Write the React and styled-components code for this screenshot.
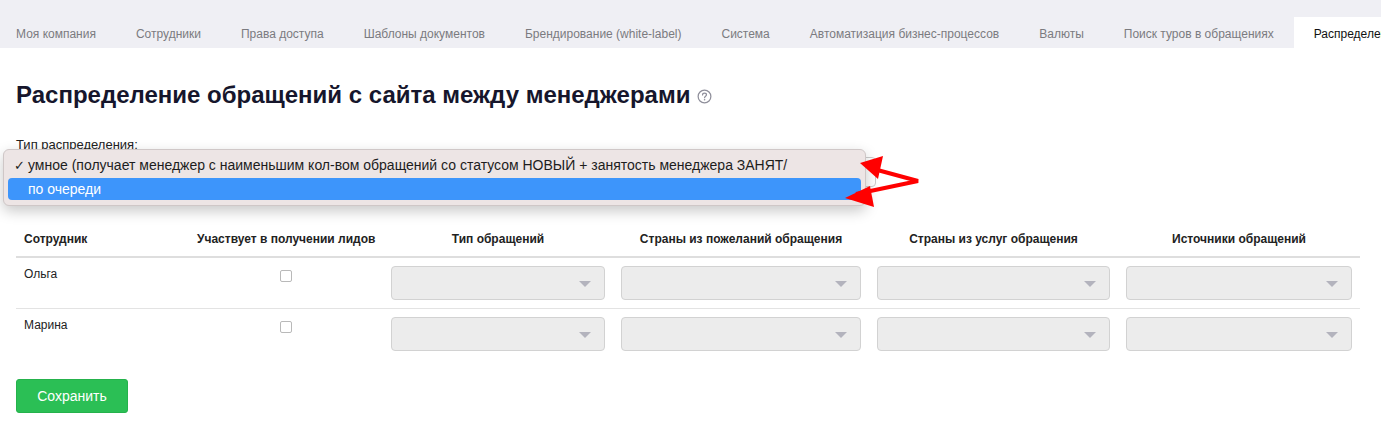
import React from "react";
import styled, { createGlobalStyle } from "styled-components";

const GlobalStyle = createGlobalStyle`
  html, body { margin: 0; padding: 0; background: #fff; }
  body { font-family: "Liberation Sans", Arial, sans-serif; color: #222; }
  * { box-sizing: border-box; }
`;

const Page = styled.div`
  width: 1381px;
  height: 425px;
  overflow: hidden;
  position: relative;
`;

const TabBar = styled.nav`
  height: 48px;
  background: #efeff4;
  display: flex;
  align-items: flex-end;
  padding-left: 16px;
  white-space: nowrap;
  overflow: hidden;
`;

const Tab = styled.div`
  flex: none;
  height: 31px;
  display: flex;
  align-items: center;
  padding: 2px 20px 0;
  font-size: 12px;
  color: ${(p) => (p.$active ? "#111" : "#7b7b80")};
  background: ${(p) => (p.$active ? "#fff" : "transparent")};
  &:first-child { padding-left: 0; }
`;

const Content = styled.main`
  padding: 0 16px;
`;

const Title = styled.h1`
  margin: 33px 0 0;
  font-size: 24px;
  line-height: 28px;
  font-weight: 700;
  color: #16162c;
  display: flex;
  align-items: center;
  gap: 7px;
`;

const HelpIcon = styled.svg`
  width: 15px;
  height: 15px;
  margin-top: 3px;
`;

const FieldGroup = styled.div`
  position: relative;
  margin-top: 28px;
  margin-bottom: 35px;
`;

const Label = styled.div`
  font-size: 13px;
  line-height: 16px;
  color: #222;
`;

const FakeSelect = styled.div`
  margin-top: 4px;
  width: 860px;
  height: 30px;
  border: 1px solid #ccc;
  border-radius: 4px;
  background: #fff;
`;

const Popup = styled.div`
  position: absolute;
  left: -13px;
  top: 12px;
  width: 863px;
  padding: 4px 4px 5px;
  background: #ede5e5;
  border: 1px solid #cfc7c7;
  border-radius: 6px;
  box-shadow: 0 5px 14px rgba(0, 0, 0, 0.22);
  z-index: 5;
`;

const Option = styled.div`
  height: 22px;
  display: flex;
  align-items: center;
  padding-left: ${(p) => (p.$checked ? "6px" : "20px")};
  font-size: 14px;
  color: ${(p) => (p.$highlighted ? "#fff" : "#1d1d1d")};
  background: ${(p) => (p.$highlighted ? "#3d95fb" : "transparent")};
  border-radius: 4px;
  margin-bottom: ${(p) => (p.$highlighted ? "0" : "2px")};
  white-space: nowrap;
`;

const Check = styled.span`
  width: 14px;
  font-size: 13px;
`;

const Arrows = styled.svg`
  position: absolute;
  left: 840px;
  top: 150px;
  z-index: 6;
`;

const Table = styled.table`
  border-collapse: collapse;
  width: 1344px;
  table-layout: fixed;
`;

const Th = styled.th`
  font-size: 12px;
  font-weight: 700;
  line-height: 16px;
  color: #222;
  padding: 9px 8px 9px;
  text-align: ${(p) => p.$align || "center"};
  border-bottom: 2px solid #dedede;
  white-space: nowrap;
`;

const Td = styled.td`
  font-size: 12px;
  line-height: 16px;
  color: #222;
  padding: 8px;
  vertical-align: top;
  text-align: ${(p) => p.$align || "left"};
  border-bottom: ${(p) => (p.$last ? "none" : "1px solid #e3e3e3")};
`;

const Checkbox = styled.span`
  display: inline-block;
  width: 12px;
  height: 12px;
  margin-top: 4px;
  border: 1px solid #b9b9b9;
  border-radius: 2px;
  background: #fff;
`;

const SelectBox = styled.div`
  height: 34px;
  background: #ececec;
  border: 1px solid #d2d2d2;
  border-radius: 4px;
  position: relative;
  &::after {
    content: "";
    position: absolute;
    right: 13px;
    top: 14px;
    border-left: 6px solid transparent;
    border-right: 6px solid transparent;
    border-top: 6px solid #b3b3bd;
  }
`;

const SaveButton = styled.button`
  margin-top: 20px;
  width: 112px;
  height: 34px;
  border: 1px solid #25b24c;
  border-radius: 3px;
  background: #2bbf55;
  color: #fff;
  font-family: "Liberation Sans", Arial, sans-serif;
  font-size: 14px;
  cursor: pointer;
`;

const tabs = [
  "Моя компания",
  "Сотрудники",
  "Права доступа",
  "Шаблоны документов",
  "Брендирование (white-label)",
  "Система",
  "Автоматизация бизнес-процессов",
  "Валюты",
  "Поиск туров в обращениях",
];

const columns = [
  { title: "Сотрудник", width: 173, align: "left" },
  { title: "Участвует в получении лидов", width: 194 },
  { title: "Тип обращений", width: 230 },
  { title: "Страны из пожеланий обращения", width: 256 },
  { title: "Страны из услуг обращения", width: 249 },
  { title: "Источники обращений", width: 242 },
];

const people = ["Ольга", "Марина"];

export default function App() {
  return (
    <Page>
      <GlobalStyle />
      <TabBar>
        {tabs.map((t) => (
          <Tab key={t}>{t}</Tab>
        ))}
        <Tab $active>Распределение обращений</Tab>
      </TabBar>
      <Content>
        <Title>
          Распределение обращений с сайта между менеджерами
          <HelpIcon viewBox="0 0 16 16">
            <circle cx="8" cy="8" r="6.8" fill="none" stroke="#8e8e9a" strokeWidth="1.3" />
            <path
              d="M5.9 6.3c0-1.2.9-2 2.1-2s2.1.8 2.1 1.9c0 1.5-2 1.6-2 3.1"
              fill="none"
              stroke="#8e8e9a"
              strokeWidth="1.3"
              strokeLinecap="round"
            />
            <circle cx="8.1" cy="11.4" r="0.85" fill="#8e8e9a" />
          </HelpIcon>
        </Title>
        <FieldGroup>
          <Label>Тип распределения:</Label>
          <FakeSelect />
          <Popup>
            <Option $checked>
              <Check>✓</Check>
              умное (получает менеджер с наименьшим кол-вом обращений со статусом НОВЫЙ + занятость менеджера ЗАНЯТ/
            </Option>
            <Option $highlighted>по очереди</Option>
          </Popup>
        </FieldGroup>
        <Table>
          <colgroup>
            {columns.map((c) => (
              <col key={c.title} style={{ width: c.width }} />
            ))}
          </colgroup>
          <thead>
            <tr>
              {columns.map((c) => (
                <Th key={c.title} $align={c.align}>
                  {c.title}
                </Th>
              ))}
            </tr>
          </thead>
          <tbody>
            {people.map((name, i) => {
              const last = i === people.length - 1;
              return (
                <tr key={name}>
                  <Td $last={last}>{name}</Td>
                  <Td $last={last} $align="center">
                    <Checkbox />
                  </Td>
                  <Td $last={last}><SelectBox /></Td>
                  <Td $last={last}><SelectBox /></Td>
                  <Td $last={last}><SelectBox /></Td>
                  <Td $last={last}><SelectBox /></Td>
                </tr>
              );
            })}
          </tbody>
        </Table>
        <SaveButton>Сохранить</SaveButton>
      </Content>
      <Arrows width="90" height="60" viewBox="0 0 90 60">
        <polyline
          points="30,18 78,31 16,44"
          fill="none"
          stroke="#ff0000"
          strokeWidth="4"
          strokeLinejoin="miter"
        />
        <polygon points="20,13 43,6 38,29" fill="#ff0000" />
        <polygon points="5,48 30,36 34,57" fill="#ff0000" />
      </Arrows>
    </Page>
  );
}
